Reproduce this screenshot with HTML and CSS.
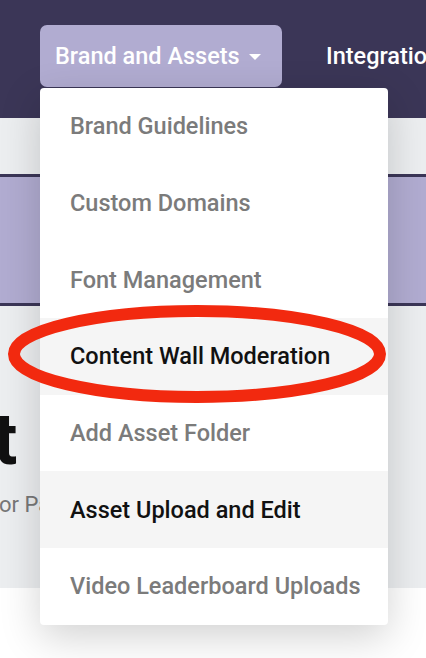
FILE: index.html
```html
<!DOCTYPE html>
<html lang="en">
<head>
  <meta charset="UTF-8" />
  <meta name="viewport" content="width=device-width, initial-scale=1.0"/>
  <title>Brand and Assets</title>
  <link rel="stylesheet" href="styles.css">
</head>
<body>

  <header class="topbar">
    <div class="nav-item">
      <button class="nav-button">
        Brand and Assets
        <svg class="caret" width="12" height="6" viewBox="0 0 12 6"><path d="M0 0h12L6 6z" fill="#fff"/></svg>
      </button>
      <ul class="dropdown">
        <li>Brand Guidelines</li>
        <li>Custom Domains</li>
        <li>Font Management</li>
        <li class="active">
          Content Wall Moderation
          <svg class="circled" width="380" height="110" viewBox="0 0 380 110">
            <ellipse cx="157" cy="54" rx="183" ry="43" fill="none" stroke="#f2290f" stroke-width="12"/>
          </svg>
        </li>
        <li>Add Asset Folder</li>
        <li class="active">Asset Upload and Edit</li>
        <li>Video Leaderboard Uploads</li>
      </ul>
    </div>
    <a class="nav-link">Integrations</a>
  </header>

  <div class="subbar"></div>
  <div class="band"></div>

  <main class="content">
    <h1>t</h1>
    <p>or Pages</p>
  </main>

  <footer class="footer"></footer>

</body>
</html>
```

FILE: styles.css
```css
body {
  margin: 0;
  font-family: Roboto, "Liberation Sans", sans-serif;
  background: #fff;
  overflow: hidden;
}
.topbar {
  height: 118px;
  box-sizing: border-box;
  padding: 25px 0 0 40px;
  background: #3b3657;
  display: flex;
  align-items: flex-start;
  white-space: nowrap;
}
.nav-item {
  position: relative;
  z-index: 2;
}
.nav-button {
  height: 62px;
  width: 242px;
  padding: 0 15px;
  display: flex;
  align-items: center;
  gap: 9px;
  background: #b1acd1;
  color: #fff;
  border: none;
  border-radius: 7px;
  font-family: inherit;
  font-size: 23.5px;
  font-weight: 500;
}
.caret {
  margin-top: 2px;
}
.nav-link {
  margin-left: 44px;
  line-height: 62px;
  color: #fff;
  font-size: 23.5px;
  font-weight: 500;
}
.dropdown {
  position: absolute;
  top: 63px;
  left: 0;
  width: 348px;
  margin: 0;
  padding: 0;
  list-style: none;
  background: #fff;
  border-radius: 4px;
  box-shadow: 0 12px 40px rgba(0, 0, 0, 0.18);
}
.dropdown li {
  position: relative;
  height: 76.7px;
  padding-left: 30px;
  display: flex;
  align-items: center;
  color: #7b7b7b;
  font-size: 23.5px;
  font-weight: 500;
}
.dropdown li.active {
  background: #f5f5f5;
  color: #111;
}
.circled {
  position: absolute;
  left: 0;
  top: -18px;
  overflow: visible;
}
.subbar {
  height: 56px;
  background: #eceef0;
  border-bottom: 3px solid #3b3657;
}
.band {
  height: 126px;
  background: #b1acd1;
  border-bottom: 3px solid #3b3657;
}
.content {
  height: 282px;
  box-sizing: border-box;
  padding-top: 98px;
  background: #eceef0;
  overflow: hidden;
}
.content h1 {
  margin: 0 0 16px -7px;
  font-size: 72px;
  font-weight: 700;
  line-height: 1;
  color: #111;
}
.content p {
  margin: 0 0 0 -1px;
  font-size: 22px;
  line-height: 1.2;
  color: #777;
}
.footer {
  height: 70px;
  background: #fff;
}
```
